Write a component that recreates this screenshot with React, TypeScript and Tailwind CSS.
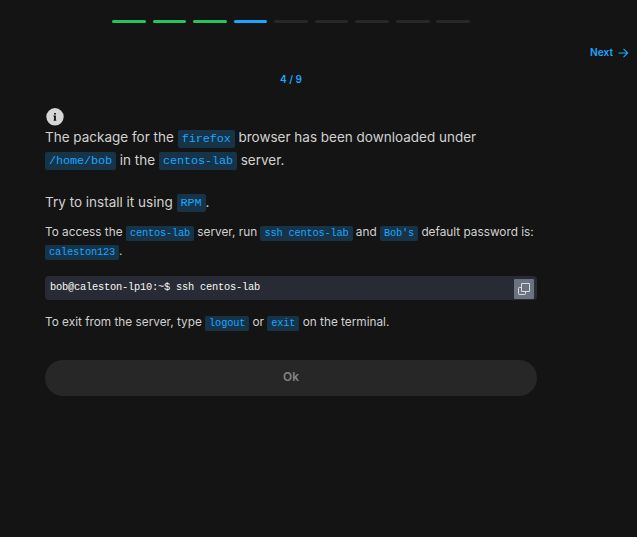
import type { ReactNode } from "react";

const steps = ["done", "done", "done", "active", "todo", "todo", "todo", "todo", "todo"];

const stepColors: Record<string, string> = {
  done: "bg-[#22c55e]",
  active: "bg-[#1aa7ff]",
  todo: "bg-[#272727]",
};

function Code({ children, className = "" }: { children: ReactNode; className?: string }) {
  return (
    <code
      className={`inline-block h-[18px] rounded-xs bg-[#163347] px-1 align-middle font-['Liberation_Mono',monospace] text-[11.8px] leading-[18px] tracking-[-0.08px] text-[#1aa7ff] ${className}`}
    >
      {children}
    </code>
  );
}

function SmallCode({ children }: { children: ReactNode }) {
  return (
    <code className="relative top-px inline-block h-[15px] rounded-xs bg-[#163347] px-[4px] align-middle font-['Liberation_Mono',monospace] text-[10.33px] leading-[15px] tracking-[-0.19px] text-[#1aa7ff]">
      {children}
    </code>
  );
}

export default function App() {
  return (
    <main className="h-[537px] w-full overflow-hidden bg-[#141414] font-['Inter',sans-serif] text-[#d1d1d1]">
      <div className="ml-[112px] flex w-[358px] gap-[6.75px] pt-5">
        {steps.map((step, i) => (
          <div key={i} className={`h-[3px] flex-1 rounded-full ${stepColors[step]}`} />
        ))}
      </div>

      <div className="mt-[22px] flex h-4 items-center justify-end gap-[5px] pr-2 text-[10.125px] font-semibold text-[#1aa7ff]">
        <span>Next</span>
        <svg width="11" height="10" viewBox="0 0 11 10" fill="none" stroke="currentColor" strokeWidth="1.1">
          <path d="M0.5 5H9.5M5.5 0.8L9.7 5L5.5 9.2" />
        </svg>
      </div>

      <section className="ml-[45px] w-[492px]">
        <div className="mt-[10px] h-4 text-center text-[10.125px] leading-4 font-semibold text-[#1aa7ff]">4 / 9</div>

        <svg className="mt-[21px] ml-[1px] block" width="18" height="18" viewBox="0 0 18 18">
          <circle cx="9" cy="8.8" r="8.7" fill="#d6d6d6" />
          <path d="M8 4.9h1.9v1.6H8zM7.4 7.5h2.5v4.3h.4v1H7.6v-1H8V8.5h-.6z" fill="#141414" />
        </svg>

        <div className="text-[13.5px] leading-[22px] whitespace-nowrap">
          <p className="h-[23px]">
            The package for the <Code className="relative top-px">firefox</Code> browser has been downloaded under
          </p>
          <p className="h-[22px]">
            <Code>/home/bob</Code> in the <Code>centos-lab</Code> server.
          </p>
          <p className="mt-5 h-[22px]">
            Try to install it using <Code>RPM</Code>.
          </p>
        </div>

        <div className="mt-[9px] text-[11.8125px] leading-5 whitespace-nowrap">
          <p className="h-[19px]">
            To access the <SmallCode>centos-lab</SmallCode> server, run <SmallCode>ssh centos-lab</SmallCode> and{" "}
            <SmallCode>Bob's</SmallCode> default password is:
          </p>
          <p className="h-[21px]">
            <SmallCode>caleston123</SmallCode>.
          </p>
        </div>

        <div className="mt-[14px] flex h-6 items-start justify-between rounded-[4px] bg-[#282a36] pr-[3px] pl-[5px]">
          <code className="pt-1 font-['Liberation_Mono',monospace] text-[10.33px] leading-[14px] tracking-[-0.2px] text-[#f8f8f2]">
            bob@caleston-lp10:~$ ssh centos-lab
          </code>
          <button className="mt-[3px] flex size-5 items-center justify-center rounded-[1px] bg-[#6b7280]">
            <svg width="12" height="12" viewBox="0 0 12 12" fill="none" stroke="#d8dade">
              <path d="M3.5 0.5h8v8h-8zM3.5 4.5H1.2Q0.5 4.5 0.5 5.2V10.8Q0.5 11.5 1.2 11.5H6.8Q7.5 11.5 7.5 10.8V8.5" />
            </svg>
          </button>
        </div>

        <p className="mt-[12px] h-5 text-[11.8125px] leading-5 whitespace-nowrap">
          To exit from the server, type <SmallCode>logout</SmallCode> or <SmallCode>exit</SmallCode> on the terminal.
        </p>

        <button className="mt-7 flex h-9 w-full items-center justify-center rounded-full bg-[#272727] pb-px text-[11.8125px] font-semibold text-[#858585]">
          Ok
        </button>
      </section>
    </main>
  );
}
